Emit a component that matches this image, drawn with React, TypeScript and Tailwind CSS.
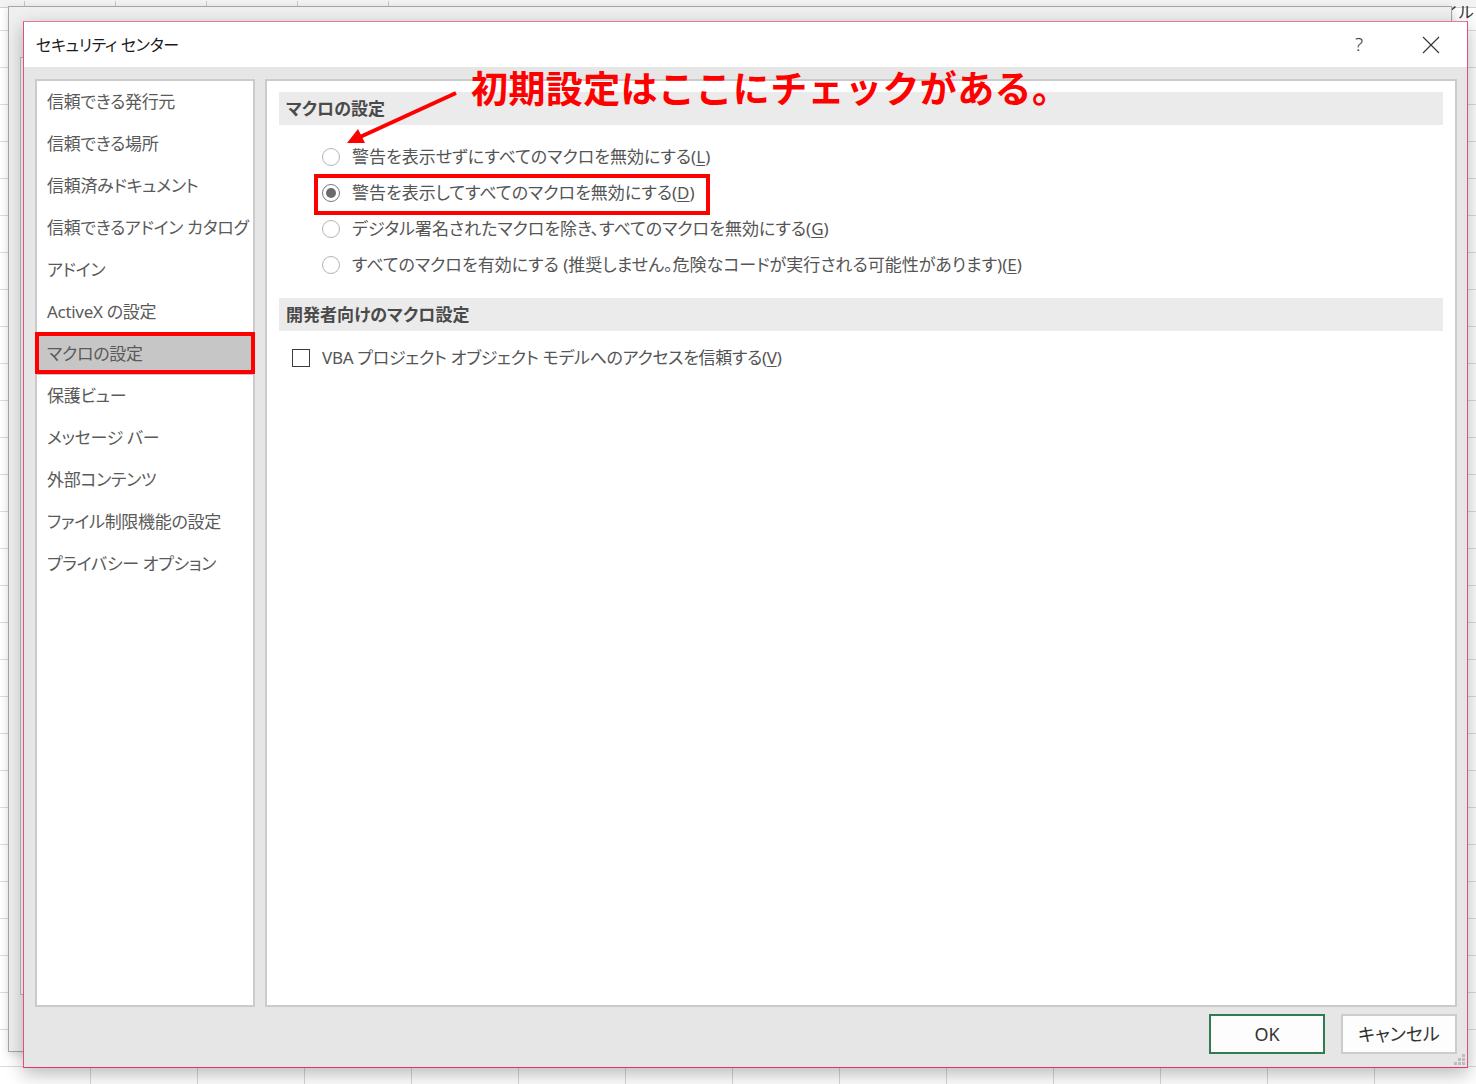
import { useState } from "react";

const navItems = [
  "信頼できる発行元",
  "信頼できる場所",
  "信頼済みドキュメント",
  "信頼できるアドイン カタログ",
  "アドイン",
  "ActiveX の設定",
  "マクロの設定",
  "保護ビュー",
  "メッセージ バー",
  "外部コンテンツ",
  "ファイル制限機能の設定",
  "プライバシー オプション",
];

const macroOptions = [
  { label: "警告を表示せずにすべてのマクロを無効にする", key: "L" },
  { label: "警告を表示してすべてのマクロを無効にする", key: "D" },
  { label: "デジタル署名されたマクロを除き、すべてのマクロを無効にする", key: "G" },
  {
    label: "すべてのマクロを有効にする (推奨しません。危険なコードが実行される可能性があります)",
    key: "E",
  },
];

const font = "font-['Noto_Sans','Noto_Sans_CJK_JP',sans-serif]";

const Radio = ({ checked }: { checked: boolean }) => (
  <span
    className={`flex h-[18px] w-[18px] shrink-0 items-center justify-center rounded-full border bg-white ${
      checked ? "border-[#7a7a7a]" : "border-[#b4b4b4]"
    }`}
  >
    {checked && <span className="h-[10px] w-[10px] rounded-full bg-[#6b6b6b]" />}
  </span>
);

const SectionHeader = ({ children }: { children: React.ReactNode }) => (
  <div className="flex h-[33px] items-center bg-[#ebebeb] pl-[7px] text-[17px] font-bold text-[#4a4a4a]">
    {children}
  </div>
);

export default function App() {
  const [selected, setSelected] = useState(1);
  const [trustVba, setTrustVba] = useState(false);

  return (
    <div
      className={`relative h-[1084px] w-[1476px] overflow-hidden bg-white bg-[linear-gradient(to_right,#d6d6d6_1px,transparent_1px),linear-gradient(to_bottom,#dcdcdc_1px,transparent_1px)] bg-size-[107px_37px] bg-position-[90px_30px] ${font}`}
    >
      {/* ribbon strip behind */}
      <div className="absolute left-0 right-0 top-0 flex h-[8px] items-end gap-[90px] border-b border-[#d0d0d0] bg-[#f3f3f3] pl-[24px]">
        <span className="h-[6px] w-px bg-[#c8c8c8]" />
        <span className="h-[6px] w-px bg-[#c8c8c8]" />
        <span className="h-[6px] w-px bg-[#c8c8c8]" />
        <span className="h-[6px] w-px bg-[#c8c8c8]" />
        <span className="h-[6px] w-px bg-[#c8c8c8]" />
      </div>
      <div className="absolute right-[2px] top-[4px] text-[16px] leading-none text-[#333]">イル</div>

      {/* options dialog behind */}
      <div className="absolute left-[8px] top-[6px] h-[1046px] w-[1444px] border border-[#a6a6a6] bg-[#f0f0f0] shadow-[0_2px_8px_rgba(0,0,0,0.15)]">
        <div className="ml-[11px] mt-[50px] h-[938px] w-[40px] border border-[#bdbdbd] bg-white">
          <div className="ml-auto mt-[478px] h-[40px] w-[4px] bg-[#9a9a9a]" />
        </div>
      </div>

      {/* security center dialog */}
      <div className="absolute left-[23px] top-[21px] flex h-[1047px] w-[1445px] flex-col border border-[#e5799c] border-b-[#e8336d] border-l-[#e0507f] border-r-[#e0507f] bg-[#e6e6e6] shadow-[0_6px_18px_rgba(0,0,0,0.28)] [font-feature-settings:'palt']">
        <div className="flex h-[45px] shrink-0 items-center bg-white">
          <span className="pl-[12px] text-[16px] tracking-[-0.3px] text-[#1a1a1a]">セキュリティ センター</span>
          <div className="ml-auto flex h-full">
            <button className="flex w-[72px] items-center justify-center text-[19px] font-light text-[#333]">?</button>
            <button className="flex w-[72px] items-center justify-center">
              <svg width="18" height="18" viewBox="0 0 18 18" stroke="#333" strokeWidth="1.1">
                <line x1="1" y1="1" x2="17" y2="17" />
                <line x1="17" y1="1" x2="1" y2="17" />
              </svg>
            </button>
          </div>
        </div>

        <div className="flex min-h-0 flex-1 flex-col pb-[13px] pl-[11px] pr-[10px] pt-[12px]">
          <div className="flex min-h-0 flex-1 gap-[10px]">
            {/* left nav */}
            <div className="w-[220px] shrink-0 border-2 border-[#cbcbcb] bg-white">
              {navItems.map((item) => {
                const active = item === "マクロの設定";
                return (
                  <div
                    key={item}
                    className={`relative flex h-[42px] items-center whitespace-nowrap pl-[10px] text-[17px] tracking-[-0.3px] text-[#5a5a5a] ${
                      active ? "bg-[#c6c6c6] text-[#3a3a3a]" : ""
                    }`}
                  >
                    {item}
                    {active && (
                      <span className="absolute -left-[2px] -right-[2px] -top-px bottom-px border-4 border-[#ff0000]" />
                    )}
                  </div>
                );
              })}
            </div>

            {/* right content */}
            <div className="min-w-0 flex-1 border-2 border-[#cbcbcb] bg-white px-[12px] pt-[11px]">
              <SectionHeader>マクロの設定</SectionHeader>
              <div className="mt-[14px] pl-[43px]">
                {macroOptions.map((opt, i) => (
                  <div
                    key={opt.key}
                    onClick={() => setSelected(i)}
                    className="relative flex h-[36px] items-center gap-[12px] text-[17px] text-[#555]"
                  >
                    <Radio checked={selected === i} />
                    <span className="whitespace-nowrap">
                      {opt.label}(<span className="underline underline-offset-2">{opt.key}</span>)
                    </span>
                    {i === 1 && (
                      <span className="pointer-events-none absolute -left-[8px] -top-px h-[41px] w-[396px] border-4 border-[#ff0000]" />
                    )}
                  </div>
                ))}
              </div>

              <div className="mt-[15px]">
                <SectionHeader>開発者向けのマクロ設定</SectionHeader>
              </div>
              <div
                onClick={() => setTrustVba(!trustVba)}
                className="mt-[9px] flex h-[36px] items-center gap-[12px] pl-[13px] text-[17px] text-[#555]"
              >
                <span className="h-[18px] w-[18px] shrink-0 border-[1.5px] border-[#3c3c3c] bg-white" />
                <span className="whitespace-nowrap tracking-[-0.3px]">
                  VBA プロジェクト オブジェクト モデルへのアクセスを信頼する(
                  <span className="underline underline-offset-2">V</span>)
                </span>
              </div>
            </div>
          </div>

          <div className="mt-[7px] flex shrink-0 justify-end gap-[16px]">
            <button className="h-[40px] w-[116px] border-2 border-[#2f7d50] bg-[#fdfdfd] text-[18px] text-[#333]">
              OK
            </button>
            <button className="h-[40px] w-[116px] border-2 border-[#cccccc] bg-[#fdfdfd] text-[18px] text-[#333]">
              キャンセル
            </button>
          </div>
        </div>

        {/* resize grip */}
        <svg className="absolute bottom-[2px] right-[2px]" width="11" height="11" viewBox="0 0 11 11" fill="#bdbdbd">
          <rect x="8" y="0" width="3" height="3" />
          <rect x="4" y="4" width="3" height="3" />
          <rect x="8" y="4" width="3" height="3" />
          <rect x="0" y="8" width="3" height="3" />
          <rect x="4" y="8" width="3" height="3" />
          <rect x="8" y="8" width="3" height="3" />
        </svg>
      </div>

      {/* annotation */}
      <div className="absolute left-[471px] top-[70px] whitespace-nowrap text-[37px] font-bold leading-none tracking-[0.4px] text-[#ff0000]">
        初期設定はここにチェックがある。
      </div>
      <svg className="pointer-events-none absolute left-0 top-0" width="1476" height="1084">
        <line x1="456" y1="93" x2="360" y2="137" stroke="#ff0000" strokeWidth="4" />
        <polygon points="347,143 365,143 358,129" fill="#ff0000" />
      </svg>
    </div>
  );
}
